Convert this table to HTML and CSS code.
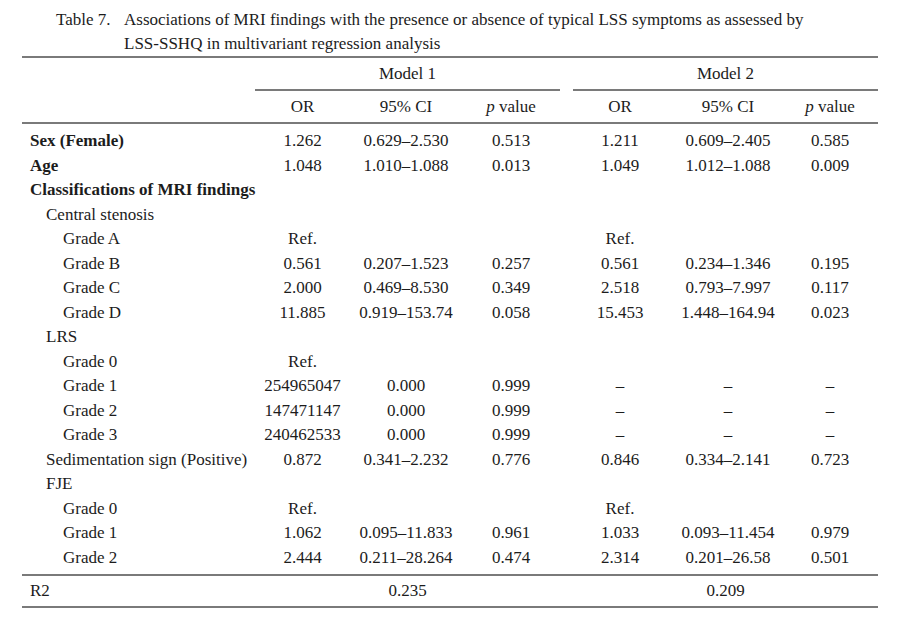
FILE: index.html
```html
<!DOCTYPE html>
<html lang="en">
<head>
<meta charset="utf-8">
<title>Table 7</title>
<link rel="stylesheet" href="styles.css">
</head>
<body>
<div class="page">
  <div class="caption">
    <span class="cap-label">Table 7.</span>
    <span class="cap-text">Associations of MRI findings with the presence or absence of typical LSS symptoms as assessed by LSS-SSHQ in multivariant regression analysis</span>
  </div>
  <table class="tbl">
    <colgroup>
      <col class="c-label"><col class="c-or1"><col class="c-ci1"><col class="c-p1"><col class="c-gap"><col class="c-or2"><col class="c-ci2"><col class="c-p2"><col class="c-pad">
    </colgroup>
    <thead>
      <tr class="h1">
        <th></th>
        <th colspan="3" class="model">Model 1</th>
        <th></th>
        <th colspan="4" class="model">Model 2</th>
      </tr>
      <tr class="h2">
        <th></th>
        <th>OR</th><th>95% CI</th><th><i>p</i> value</th>
        <th></th>
        <th>OR</th><th>95% CI</th><th><i>p</i> value</th>
        <th></th>
      </tr>
    </thead>
    <tbody class="body">
      <tr class="first"><td class="l0">Sex (Female)</td><td>1.262</td><td>0.629–2.530</td><td>0.513</td><td></td><td>1.211</td><td>0.609–2.405</td><td>0.585</td><td></td></tr>
      <tr><td class="l0">Age</td><td>1.048</td><td>1.010–1.088</td><td>0.013</td><td></td><td>1.049</td><td>1.012–1.088</td><td>0.009</td><td></td></tr>
      <tr><td class="l0">Classifications of MRI findings</td><td></td><td></td><td></td><td></td><td></td><td></td><td></td><td></td></tr>
      <tr><td class="l1">Central stenosis</td><td></td><td></td><td></td><td></td><td></td><td></td><td></td><td></td></tr>
      <tr><td class="l2">Grade A</td><td>Ref.</td><td></td><td></td><td></td><td>Ref.</td><td></td><td></td><td></td></tr>
      <tr><td class="l2">Grade B</td><td>0.561</td><td>0.207–1.523</td><td>0.257</td><td></td><td>0.561</td><td>0.234–1.346</td><td>0.195</td><td></td></tr>
      <tr><td class="l2">Grade C</td><td>2.000</td><td>0.469–8.530</td><td>0.349</td><td></td><td>2.518</td><td>0.793–7.997</td><td>0.117</td><td></td></tr>
      <tr><td class="l2">Grade D</td><td>11.885</td><td>0.919–153.74</td><td>0.058</td><td></td><td>15.453</td><td>1.448–164.94</td><td>0.023</td><td></td></tr>
      <tr><td class="l1">LRS</td><td></td><td></td><td></td><td></td><td></td><td></td><td></td><td></td></tr>
      <tr><td class="l2">Grade 0</td><td>Ref.</td><td></td><td></td><td></td><td></td><td></td><td></td><td></td></tr>
      <tr><td class="l2">Grade 1</td><td>254965047</td><td>0.000</td><td>0.999</td><td></td><td>–</td><td>–</td><td>–</td><td></td></tr>
      <tr><td class="l2">Grade 2</td><td>147471147</td><td>0.000</td><td>0.999</td><td></td><td>–</td><td>–</td><td>–</td><td></td></tr>
      <tr><td class="l2">Grade 3</td><td>240462533</td><td>0.000</td><td>0.999</td><td></td><td>–</td><td>–</td><td>–</td><td></td></tr>
      <tr><td class="l1">Sedimentation sign (Positive)</td><td>0.872</td><td>0.341–2.232</td><td>0.776</td><td></td><td>0.846</td><td>0.334–2.141</td><td>0.723</td><td></td></tr>
      <tr><td class="l1">FJE</td><td></td><td></td><td></td><td></td><td></td><td></td><td></td><td></td></tr>
      <tr><td class="l2">Grade 0</td><td>Ref.</td><td></td><td></td><td></td><td>Ref.</td><td></td><td></td><td></td></tr>
      <tr><td class="l2">Grade 1</td><td>1.062</td><td>0.095–11.833</td><td>0.961</td><td></td><td>1.033</td><td>0.093–11.454</td><td>0.979</td><td></td></tr>
      <tr class="last"><td class="l2">Grade 2</td><td>2.444</td><td>0.211–28.264</td><td>0.474</td><td></td><td>2.314</td><td>0.201–26.58</td><td>0.501</td><td></td></tr>
    </tbody>
    <tbody class="foot">
      <tr>
        <td class="l0 plain">R2</td>
        <td colspan="3">0.235</td>
        <td></td>
        <td colspan="4">0.209</td>
      </tr>
    </tbody>
  </table>
</div>
</body>
</html>
```

FILE: styles.css
```css
html, body {
  margin: 0;
  padding: 0;
  background: #ffffff;
}

body {
  font-family: "Liberation Serif", "Times New Roman", serif;
  font-size: 17px;
  color: #1c1c1c;
}

.page {
  width: 856px;
  padding: 8px 22px 0 22px;
}

.caption {
  display: flex;
  padding-left: 34px;
  line-height: 24px;
  height: 48px;
}

.cap-label {
  flex: 0 0 68px;
}

.cap-text {
  flex: 1 1 auto;
  padding-right: 70px;
}

.tbl {
  width: 856px;
  border-collapse: collapse;
  table-layout: fixed;
  border-top: 2px solid #7a7a7a;
}

.c-label { width: 233px; }
.c-or1 { width: 95px; }
.c-ci1 { width: 112px; }
.c-p1 { width: 98px; }
.c-gap { width: 13px; }
.c-or2 { width: 94px; }
.c-ci2 { width: 122px; }
.c-p2 { width: 82px; }
.c-pad { width: 7px; }

.tbl th {
  font-weight: normal;
  text-align: center;
  padding: 0;
  white-space: nowrap;
}

.h1 th {
  height: 31px;
}

.h1 .model {
  border-bottom: 2px solid #7a7a7a;
}

.h2 th {
  height: 31px;
  border-bottom: 2px solid #7a7a7a;
}

.tbl td {
  padding: 0;
  height: 24.5px;
  text-align: center;
  white-space: nowrap;
}

.body .first td {
  padding-top: 5px;
}

.body .last td {
  padding-bottom: 4px;
}

.tbl td.l0 {
  text-align: left;
  padding-left: 8px;
  font-weight: bold;
}

.tbl td.l0.plain {
  font-weight: normal;
}

.tbl td.l1 {
  text-align: left;
  padding-left: 24px;
}

.tbl td.l2 {
  text-align: left;
  padding-left: 41px;
}

.foot td {
  height: 30px;
  border-top: 2px solid #7a7a7a;
  border-bottom: 2px solid #7a7a7a;
}
```
